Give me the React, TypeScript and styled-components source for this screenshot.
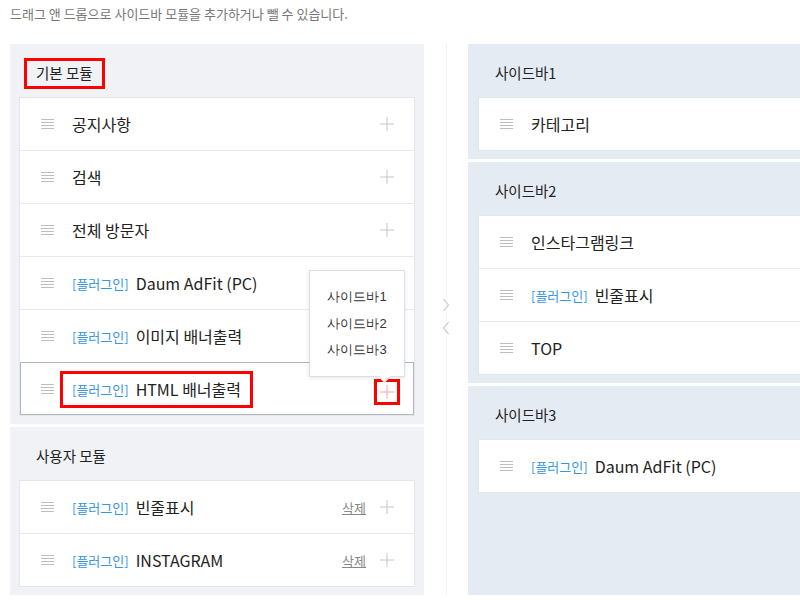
import React from "react";
import styled, { createGlobalStyle } from "styled-components";

const GlobalStyle = createGlobalStyle`
  html, body {
    margin: 0;
    padding: 0;
    background: #fff;
    overflow: hidden;
  }
  body {
    font-family: "Noto Sans CJK KR", "Noto Sans", sans-serif;
    color: #222;
  }
  ul {
    margin: 0;
    padding: 0;
    list-style: none;
  }
`;

const Page = styled.div`
  width: 880px;
  padding-left: 10px;
`;

const Guide = styled.p`
  margin: 0;
  height: 44px;
  padding-top: 4px;
  box-sizing: border-box;
  font-size: 13px;
  line-height: 20px;
  color: #777;
`;

const Board = styled.div`
  display: flex;
  height: 551px;
`;

const Column = styled.div<{ $width: number }>`
  width: ${(p) => p.$width}px;
  display: flex;
  flex-direction: column;
  gap: 3px;
`;

const Section = styled.section<{ $tone: "basic" | "side"; $fill?: boolean }>`
  display: flex;
  flex-direction: column;
  align-items: flex-start;
  background: ${(p) => (p.$tone === "basic" ? "#f0f2f5" : "#e5ebf2")};
  padding: 14px 9px 8px ${(p) => (p.$tone === "basic" ? 9 : 10)}px;
  flex: ${(p) => (p.$fill ? 1 : "none")};
`;

const Title = styled.h2<{ $marked?: boolean }>`
  display: flex;
  align-items: center;
  box-sizing: border-box;
  height: 31px;
  margin: 0 0 8px 5px;
  padding: 0 9px;
  border: 3px solid ${(p) => (p.$marked ? "#f00" : "transparent")};
  font-size: 14.5px;
  line-height: 1;
  font-weight: 400;
  color: #222;
`;

const List = styled.ul`
  align-self: stretch;
  background: #fff;
  border: 1px solid #e3e7ec;
`;

const Row = styled.li<{ $active?: boolean }>`
  position: relative;
  display: flex;
  align-items: center;
  box-sizing: border-box;
  height: 53px;
  padding: 0 14px 0 21px;
  border-top: 1px solid #e6e9ee;
  &:first-child {
    border-top: 0;
    height: 52px;
  }
  ${(p) =>
    p.$active &&
    `
    z-index: 1;
    outline: 1px solid #b3b8be;
    outline-offset: -1px;
  `}
`;

const Handle = styled.svg`
  flex: none;
  width: 13px;
  height: 10px;
  margin-right: 18px;
`;

const Name = styled.span<{ $marked?: boolean }>`
  display: flex;
  align-items: center;
  flex: 1;
  font-size: 16px;
  color: #222;
  white-space: nowrap;
  ${(p) =>
    p.$marked &&
    `
    flex: none;
    box-sizing: border-box;
    height: 37px;
    margin-left: -12px;
    margin-right: auto;
    padding: 0 9px;
    border: 3px solid #f00;
  `}
`;

const Plugin = styled.span`
  font-size: 13px;
  color: #3596df;
  margin-right: 7px;
`;

const Delete = styled.a`
  font-size: 13px;
  color: #888;
  text-decoration: underline;
  margin-right: 8px;
  cursor: pointer;
`;

const PlusBtn = styled.button<{ $marked?: boolean }>`
  position: relative;
  display: flex;
  align-items: center;
  justify-content: center;
  width: 26px;
  height: 26px;
  margin-top: ${(p) => (p.$marked ? 5 : 0)}px;
  padding: 0;
  background: #fff;
  border: 3px solid ${(p) => (p.$marked ? "#f00" : "transparent")};
  color: ${(p) => (p.$marked ? "#f6a3a3" : "#c6c6c6")};
  cursor: pointer;
`;

const Popup = styled.ul`
  position: absolute;
  right: -8px;
  bottom: calc(100% + 5px);
  width: 96px;
  box-sizing: border-box;
  padding: 13px 0 12px;
  background: #fff;
  border: 1px solid #dcdfe4;
  box-shadow: 0 1px 4px rgba(0, 0, 0, 0.1);
  &::after {
    content: "";
    position: absolute;
    right: 15px;
    bottom: -5px;
    width: 8px;
    height: 8px;
    background: #fff;
    border-right: 1px solid #dcdfe4;
    border-bottom: 1px solid #dcdfe4;
    transform: rotate(45deg);
  }
`;

const PopupItem = styled.li`
  font-size: 13px;
  line-height: 26.5px;
  text-align: center;
  color: #333;
`;

const Middle = styled.div`
  width: 44px;
  display: flex;
  flex-direction: column;
  align-items: center;
  justify-content: center;
  gap: 9px;
  padding-bottom: 6px;
  box-sizing: border-box;
  background: linear-gradient(#eef0f3, #eef0f3) center / 1px 100% no-repeat;
`;

const Arrow = styled.svg`
  width: 10px;
  height: 14px;
  background: #fff;
  padding: 0 2px;
`;

const HandleIcon = () => (
  <Handle viewBox="0 0 13 10">
    {[0.5, 3.5, 6.5, 9.5].map((y) => (
      <line key={y} x1="0" x2="13" y1={y} y2={y} stroke="#bdbdbd" strokeWidth="1" />
    ))}
  </Handle>
);

const PlusIcon = () => (
  <svg width="14" height="14" viewBox="0 0 14 14">
    <path d="M7 0V14M0 7H14" stroke="currentColor" strokeWidth="1" />
  </svg>
);

type Item = {
  name: string;
  plugin?: boolean;
  removable?: boolean;
  active?: boolean;
};

const basicItems: Item[] = [
  { name: "공지사항" },
  { name: "검색" },
  { name: "전체 방문자" },
  { name: "Daum AdFit (PC)", plugin: true },
  { name: "이미지 배너출력", plugin: true },
  { name: "HTML 배너출력", plugin: true, active: true },
];

const userItems: Item[] = [
  { name: "빈줄표시", plugin: true, removable: true },
  { name: "INSTAGRAM", plugin: true, removable: true },
];

const sidebars: { title: string; items: Item[] }[] = [
  { title: "사이드바1", items: [{ name: "카테고리" }] },
  {
    title: "사이드바2",
    items: [{ name: "인스타그램링크" }, { name: "빈줄표시", plugin: true }, { name: "TOP" }],
  },
  { title: "사이드바3", items: [{ name: "Daum AdFit (PC)", plugin: true }] },
];

const ModuleRow = ({ item, withPlus }: { item: Item; withPlus?: boolean }) => (
  <Row $active={item.active}>
    <HandleIcon />
    <Name $marked={item.active}>
      {item.plugin && <Plugin>[플러그인]</Plugin>}
      {item.name}
    </Name>
    {item.removable && <Delete>삭제</Delete>}
    {withPlus && (
      <PlusBtn $marked={item.active}>
        <PlusIcon />
        {item.active && (
          <Popup>
            <PopupItem>사이드바1</PopupItem>
            <PopupItem>사이드바2</PopupItem>
            <PopupItem>사이드바3</PopupItem>
          </Popup>
        )}
      </PlusBtn>
    )}
  </Row>
);

export default function App() {
  return (
    <Page>
      <GlobalStyle />
      <Guide>드래그 앤 드롭으로 사이드바 모듈을 추가하거나 뺄 수 있습니다.</Guide>
      <Board>
        <Column $width={414}>
          <Section $tone="basic">
            <Title $marked>기본 모듈</Title>
            <List>
              {basicItems.map((item) => (
                <ModuleRow key={item.name} item={item} withPlus />
              ))}
            </List>
          </Section>
          <Section $tone="basic" $fill>
            <Title>사용자 모듈</Title>
            <List>
              {userItems.map((item) => (
                <ModuleRow key={item.name} item={item} withPlus />
              ))}
            </List>
          </Section>
        </Column>
        <Middle>
          <Arrow viewBox="0 0 6 14">
            <path d="M0.5 1L5.5 7L0.5 13" fill="none" stroke="#cfcfcf" strokeWidth="1.2" />
          </Arrow>
          <Arrow viewBox="0 0 6 14">
            <path d="M5.5 1L0.5 7L5.5 13" fill="none" stroke="#cfcfcf" strokeWidth="1.2" />
          </Arrow>
        </Middle>
        <Column $width={414}>
          {sidebars.map((bar, i) => (
            <Section key={bar.title} $tone="side" $fill={i === sidebars.length - 1}>
              <Title>{bar.title}</Title>
              <List>
                {bar.items.map((item) => (
                  <ModuleRow key={item.name} item={item} />
                ))}
              </List>
            </Section>
          ))}
        </Column>
      </Board>
    </Page>
  );
}
